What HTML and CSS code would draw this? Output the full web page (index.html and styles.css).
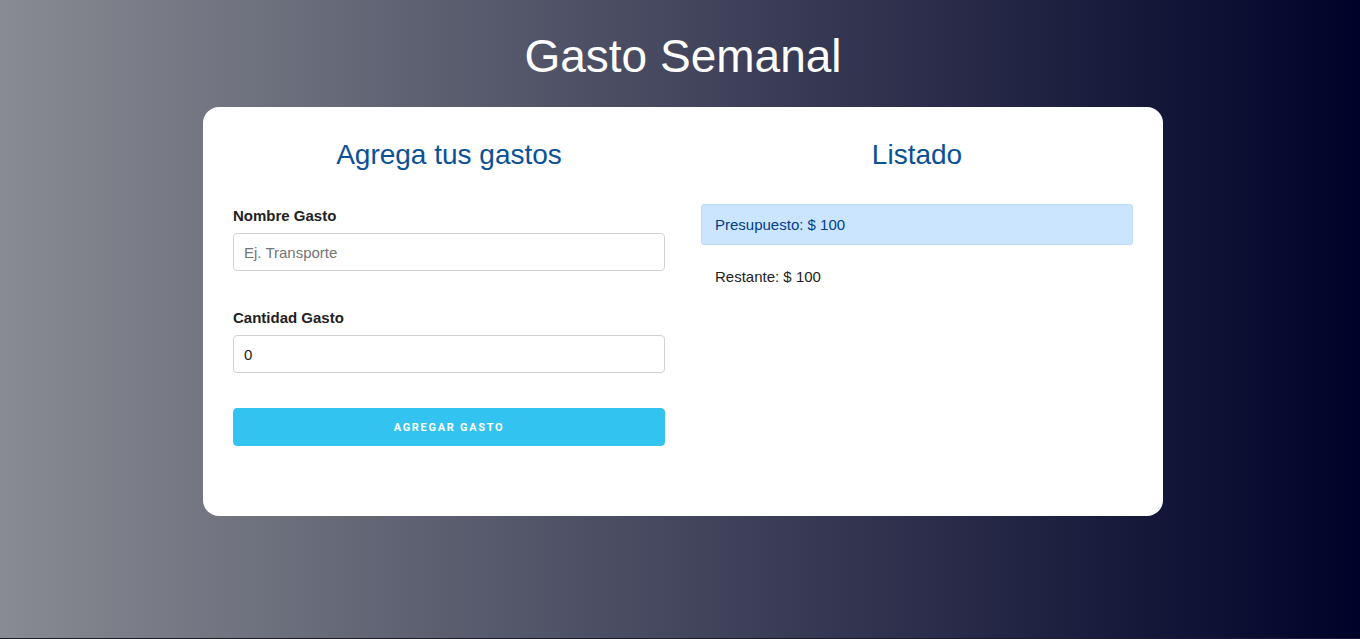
FILE: index.html
```html
<!DOCTYPE html>
<html lang="es">
<head>
<meta charset="utf-8">
<title>Gasto Semanal</title>
<link rel="stylesheet" href="styles.css">
</head>
<body>
<div class="page">
  <header class="header">
    <h1 class="title">Gasto Semanal</h1>
  </header>
  <main class="card">
    <section class="col">
      <h2 class="col-title">Agrega tus gastos</h2>
      <form class="form">
        <div class="field">
          <label class="label" for="nombre">Nombre Gasto</label>
          <input class="input" id="nombre" type="text" placeholder="Ej. Transporte">
        </div>
        <div class="field">
          <label class="label" for="cantidad">Cantidad Gasto</label>
          <input class="input" id="cantidad" type="number" value="0">
        </div>
        <button class="btn-primary" type="button">Agregar Gasto</button>
      </form>
    </section>
    <section class="col">
      <h2 class="col-title">Listado</h2>
      <div class="alert alert-primary">Presupuesto: $ 100</div>
      <div class="alert">Restante: $ 100</div>
    </section>
  </main>
</div>
</body>
</html>
```

FILE: styles.css
```css
html {
  background: #1c1c26;
}
body {
  margin: 0;
  min-height: 638px;
  background: linear-gradient(to right, #888b92 0%, #000229 100%);
  font-family: "Liberation Sans", Arial, sans-serif;
  font-size: 15px;
  line-height: 1.6;
  color: #222;
}
.page {
  padding-left: 6px;
}
.header {
  display: flex;
  justify-content: center;
}
.title {
  margin: 29px 0 23px;
  font-size: 46px;
  line-height: 55px;
  font-weight: 400;
  color: #fff;
}
.card {
  width: 960px;
  box-sizing: border-box;
  margin: 0 auto;
  background: #fff;
  border-radius: 16px;
  padding: 30px 30px 70px;
  display: grid;
  grid-template-columns: 1fr 1fr;
  column-gap: 36px;
}
.col-title {
  margin: 0 0 32px;
  text-align: center;
  font-size: 28px;
  line-height: 35px;
  font-weight: 400;
  color: #0b5196;
}
.form {
  display: flex;
  flex-direction: column;
}
.field {
  display: flex;
  flex-direction: column;
  margin-bottom: 35px;
}
.label {
  font-weight: 700;
  font-size: 15px;
  line-height: 24px;
  margin-bottom: 5px;
  color: #222;
}
.input {
  height: 38px;
  box-sizing: border-box;
  padding: 6px 10px;
  border: 1px solid #d1d1d1;
  border-radius: 4px;
  font-family: "Liberation Sans", Arial, sans-serif;
  font-size: 15px;
  color: #222;
  background: #fff;
  outline: none;
}
.input::placeholder {
  color: #757575;
}
.input::-webkit-outer-spin-button,
.input::-webkit-inner-spin-button {
  -webkit-appearance: none;
  margin: 0;
}
.btn-primary {
  height: 38px;
  border: 1px solid #33c3f0;
  border-radius: 4px;
  background: #33c3f0;
  color: #fff;
  font-family: "Roboto", "Open Sans", sans-serif;
  font-size: 11px;
  font-weight: 700;
  letter-spacing: 1.7px;
  text-transform: uppercase;
  cursor: pointer;
}
.alert {
  padding: 8px 13px 7px 13px;
  border: 1px solid transparent;
  border-radius: 3px;
  margin-bottom: 10px;
  line-height: 24px;
  font-size: 15px;
  color: #222;
}
.alert + .alert {
  padding-top: 9px;
}
.alert-primary {
  background: #cce5ff;
  border-color: #b8daff;
  color: #004085;
}
```
